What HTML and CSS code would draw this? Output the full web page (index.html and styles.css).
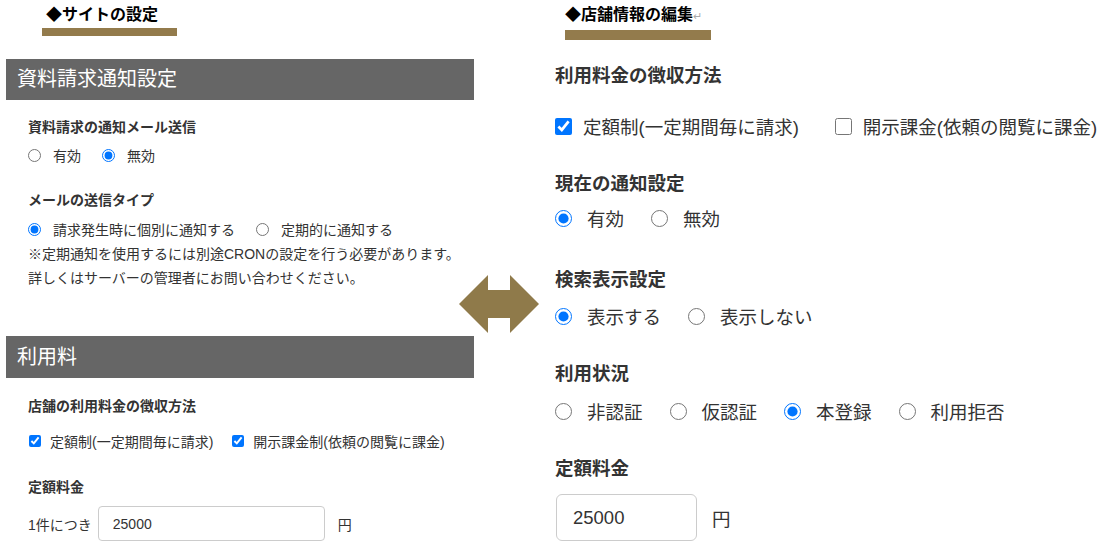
FILE: index.html
```html
<!DOCTYPE html>
<html>
	<head>
		<meta charset="UTF-8">
		<title>設定と店舗情報の編集</title>
		<link rel="stylesheet" href="styles.css">
	</head>
	<body>
		<div class="page">
			<div class="site">
				<div class="caption">
					<p class="caption-text">◆サイトの設定</p>
					<div class="caption-bar"></div>
				</div>

				<h2 class="bar-title">資料請求通知設定</h2>
				<div class="group">
					<h3 class="label label-first">資料請求の通知メール送信</h3>
					<div class="row row-radio">
						<label class="opt"><input type="radio" name="mail"> 有効</label>
						<label class="opt"><input type="radio" name="mail" checked> 無効</label>
					</div>
					<h3 class="label label-type">メールの送信タイプ</h3>
					<div class="row row-type">
						<label class="opt"><input type="radio" name="type" checked> 請求発生時に個別に通知する</label>
						<label class="opt"><input type="radio" name="type"> 定期的に通知する</label>
					</div>
					<p class="note">※定期通知を使用するには別途CRONの設定を行う必要があります。<br>詳しくはサーバーの管理者にお問い合わせください。</p>
				</div>

				<h2 class="bar-title bar-fee">利用料</h2>
				<div class="group">
					<h3 class="label label-fee">店舗の利用料金の徴収方法</h3>
					<div class="row row-check">
						<label class="opt"><input type="checkbox" checked> 定額制(一定期間毎に請求)</label>
						<label class="opt"><input type="checkbox" checked> 開示課金制(依頼の閲覧に課金)</label>
					</div>
					<h3 class="label label-price">定額料金</h3>
					<div class="row row-input">
						<span>1件につき</span>
						<input class="text" type="text" value="25000">
						<span class="yen">円</span>
					</div>
				</div>
			</div>

			<div class="shop">
				<div class="caption">
					<p class="caption-text">◆店舗情報の編集<span class="ret">↵</span></p>
					<div class="caption-bar"></div>
				</div>

				<h3 class="label label-first">利用料金の徴収方法</h3>
				<div class="row row-check">
					<label class="opt"><input type="checkbox" checked> 定額制(一定期間毎に請求)</label>
					<label class="opt"><input type="checkbox"> 開示課金(依頼の閲覧に課金)</label>
				</div>

				<h3 class="label label-notice">現在の通知設定</h3>
				<div class="row row-notice">
					<label class="opt"><input type="radio" name="notice" checked> 有効</label>
					<label class="opt"><input type="radio" name="notice"> 無効</label>
				</div>

				<h3 class="label label-search">検索表示設定</h3>
				<div class="row row-search">
					<label class="opt"><input type="radio" name="search" checked> 表示する</label>
					<label class="opt"><input type="radio" name="search"> 表示しない</label>
				</div>

				<h3 class="label label-status">利用状況</h3>
				<div class="row row-status">
					<label class="opt"><input type="radio" name="status"> 非認証</label>
					<label class="opt"><input type="radio" name="status"> 仮認証</label>
					<label class="opt"><input type="radio" name="status" checked> 本登録</label>
					<label class="opt"><input type="radio" name="status"> 利用拒否</label>
				</div>

				<h3 class="label label-price">定額料金</h3>
				<div class="row row-input">
					<input class="text" type="text" value="25000">
					<span class="yen">円</span>
				</div>
			</div>

			<svg class="arrow" width="80" height="58" viewBox="0 0 80 58">
				<polygon points="0,29 29,0 29,15 51,15 51,0 80,29 51,58 51,43 29,43 29,58" fill="#8f7a4a"/>
			</svg>
		</div>
	</body>
</html>
```

FILE: styles.css
```css
*{
	padding: 0;
	margin: 0;
	box-sizing: border-box;
}
body{
	background: #FFFFFF;
	color: #333333;
	font-family: "Liberation Sans", "Noto Sans CJK JP", sans-serif;
}
.page{
	position: relative;
	display: flex;
	padding-top: 5px;
	height: 548px;
	overflow: hidden;
}

/* 見出し（◆付き） */
.caption-text{
	font-size: 16px;
	line-height: 20px;
	font-weight: bold;
	color: #000000;
}
.caption-bar{
	background: #937b4c;
}
.ret{
	font-size: 11px;
	font-weight: normal;
	color: #aaaaaa;
}

/* 左：サイトの設定 */
.site{
	width: 468px;
	flex: none;
	margin-left: 6px;
	font-size: 14px;
}
.site .caption{
	margin-left: 36px;
}
.site .caption-text{
	padding-left: 4px;
}
.site .caption-bar{
	width: 135px;
	height: 8px;
	margin-top: 3px;
}
.bar-title{
	margin-top: 23px;
	height: 41px;
	line-height: 41px;
	padding-left: 11px;
	background: #666666;
	color: #FFFFFF;
	font-size: 20px;
	font-weight: normal;
}
.bar-title.bar-fee{
	margin-top: 46px;
	height: 42px;
	line-height: 42px;
}
.group{
	padding-left: 22px;
}
.label{
	font-weight: bold;
}
.site .label{
	font-size: 14px;
	line-height: 20px;
}
.row{
	display: flex;
	align-items: center;
}
.opt{
	display: flex;
	align-items: center;
	white-space: nowrap;
}
.opt input{
	margin: 0;
	flex: none;
}
.site .row{
	height: 20px;
	gap: 21px;
}
.site .opt input{
	width: 13px;
	height: 13px;
	margin-right: 12px;
}
.site .label-first{ margin-top: 17px; }
.site .row-radio{ margin-top: 8px; }
.site .label-type{ margin-top: 25px; }
.site .row-type{ margin-top: 9px; }
.note{
	margin-top: 3px;
	line-height: 24px;
	white-space: nowrap;
}
.site .label-fee{ margin-top: 18px; }
.site .row-check{
	margin-top: 15px;
	gap: 18px;
}
.site .row-check input{
	margin-left: 1px;
	width: 12px;
	height: 12px;
	margin-right: 9px;
}
.site .label-price{ margin-top: 26px; }
.site .row-input{
	margin-top: 9px;
	height: 35px;
	gap: 0;
}
.text{
	border: 1px solid #cccccc;
	color: #333333;
	font-family: "Liberation Sans", "Noto Sans CJK JP", sans-serif;
	outline: none;
}
.site .text{
	width: 227px;
	height: 35px;
	margin-left: 6px;
	padding-left: 14px;
	border-radius: 4px;
	font-size: 14px;
}
.site .yen{
	margin-left: 13px;
}

/* 右：店舗情報の編集 */
.shop{
	margin-left: 81px;
	font-size: 18.5px;
}
.shop .caption{
	margin-left: 10px;
}
.shop .caption-bar{
	width: 146px;
	height: 10px;
	margin-top: 4px;
}
.shop .label{
	font-size: 18.5px;
	line-height: 24px;
}
.shop .row{
	height: 24px;
	gap: 27px;
}
.shop .opt input{
	width: 17px;
	height: 17px;
	margin-right: 15px;
}
.shop .label-first{ margin-top: 24px; }
.shop .row-check{
	margin-top: 26px;
	gap: 36px;
}
.shop .row-check input{
	margin-right: 11px;
}
.shop .label-notice{ margin-top: 34px; }
.shop .row-notice{ margin-top: 10px; }
.shop .label-search{ margin-top: 38px; }
.shop .row-search{ margin-top: 12px; }
.shop .label-status{ margin-top: 34px; }
.shop .row-status{ margin-top: 13px; }
.shop .label-price{ margin-top: 34px; }
.shop .row-input{
	margin-top: 13px;
	height: 47px;
	gap: 0;
}
.shop .text{
	width: 141px;
	height: 47px;
	margin-left: 1px;
	padding-left: 16px;
	border-radius: 6px;
	font-size: 18.5px;
}
.shop .yen{
	margin-left: 15px;
}

.arrow{
	position: absolute;
	left: 459px;
	top: 275px;
}
```
